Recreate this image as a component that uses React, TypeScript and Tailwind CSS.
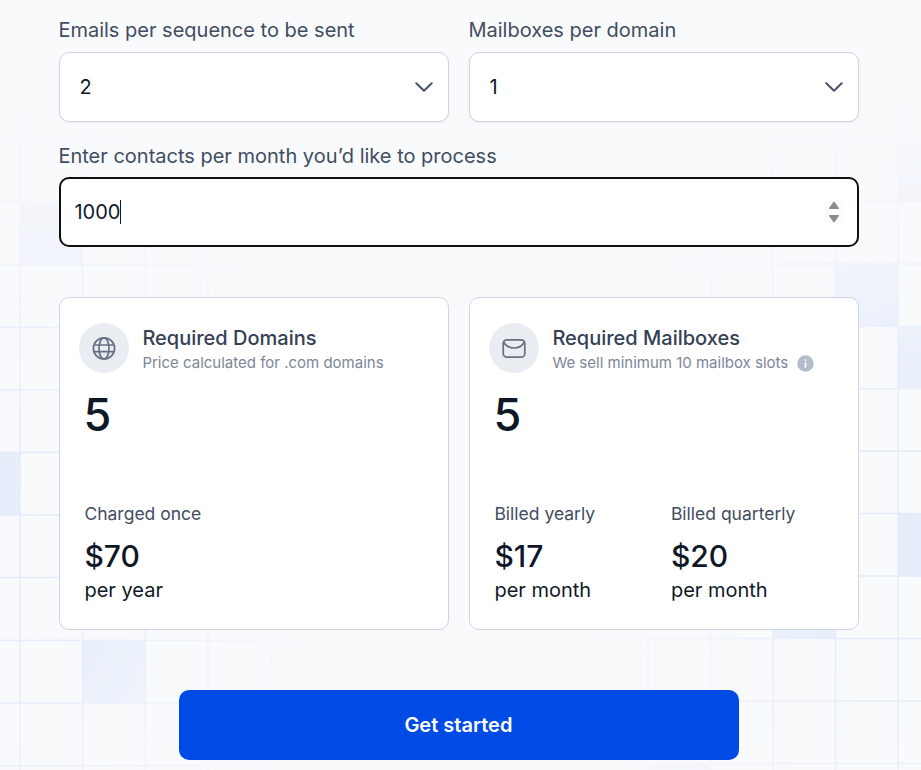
import React from "react";

type Cell = [number, number];

function GridSide({ xs, ys, cells, mask, cx, width }: { xs: number[]; ys: number[]; cells: Cell[]; mask: string; cx: number; width: number }) {
  const left = cx === 0 ? 0 : cx - width;
  return (
    <g mask={`url(#${mask})`}>
      {cells.map(([x, y]) => (
        <rect key={`${x}-${y}`} x={x} y={y} width={62.6} height={62.6} fill="#e6edfa" />
      ))}
      {xs.map((x) => (
        <rect key={x} x={x - 0.75} y={0} width={1.5} height={770} fill="#e3ecfc" />
      ))}
      {ys.map((y) => (
        <rect key={y} x={left} y={y - 0.75} width={width} height={1.5} fill="#e3ecfc" />
      ))}
    </g>
  );
}

function Backdrop() {
  return (
    <svg className="absolute inset-0" width="921" height="770" viewBox="0 0 921 770" aria-hidden="true">
      <defs>
        <radialGradient id="fadeLeft" gradientUnits="userSpaceOnUse" cx="0" cy="0" r="1" gradientTransform="translate(0 550) scale(330 460)">
          <stop offset="0" stopColor="#fff" />
          <stop offset="0.25" stopColor="#f4f4f4" />
          <stop offset="0.75" stopColor="#4d4d4d" />
          <stop offset="1" stopColor="#000" />
        </radialGradient>
        <radialGradient id="fadeRight" gradientUnits="userSpaceOnUse" cx="0" cy="0" r="1" gradientTransform="translate(921 560) scale(340 480)">
          <stop offset="0" stopColor="#fff" />
          <stop offset="0.3" stopColor="#f8f8f8" />
          <stop offset="0.75" stopColor="#555" />
          <stop offset="1" stopColor="#000" />
        </radialGradient>
        <mask id="maskLeft" maskUnits="userSpaceOnUse" x="0" y="0" width="921" height="770">
          <rect width="921" height="770" fill="url(#fadeLeft)" />
        </mask>
        <mask id="maskRight" maskUnits="userSpaceOnUse" x="0" y="0" width="921" height="770">
          <rect width="921" height="770" fill="url(#fadeRight)" />
        </mask>
      </defs>
      <GridSide
        mask="maskLeft"
        cx={0}
        width={400}
        xs={[20, 82.6, 145.4, 208, 270.6, 333.2]}
        ys={[139.5, 202, 264.7, 327.3, 389.8, 452.4, 515, 577.6, 640.4, 703, 765.6]}
        cells={[[20, 202], [-42.6, 452.4], [82.6, 640.4]]}
      />
      <GridSide
        mask="maskRight"
        cx={921}
        width={400}
        xs={[585.5, 648, 710.5, 773, 835.5, 898]}
        ys={[139.3, 201.6, 264, 326.4, 388.7, 451.2, 513.5, 576, 638.5, 701, 763.5]}
        cells={[[898, 139.3], [835.5, 264], [898, 326.4], [898, 513.5], [773, 576], [648, 763.5]]}
      />
    </svg>
  );
}

function Select({ label, value }: { label: string; value: string }) {
  return (
    <div className="flex flex-1 flex-col gap-2">
      <div className="-ml-[0.6px] text-xl leading-7 text-[#414d60]">{label}</div>
      <div className="flex h-[70px] items-center justify-between rounded-[10px] border border-[#cdd3df] bg-white pr-[15px] pl-[19.4px] text-xl text-[#101828] shadow-xs">
        <span>{value}</span>
        <svg width="18" height="18" viewBox="0 0 18 18" fill="none" stroke="#475467" strokeWidth="2" strokeLinecap="round" strokeLinejoin="round">
          <path d="M1.3 5.2 9 12.7l7.7-7.5" />
        </svg>
      </div>
    </div>
  );
}

function GlobeIcon() {
  return (
    <svg className="-ml-px" width="24" height="24" viewBox="0 0 24 24" fill="none" stroke="#667085" strokeWidth="1.7">
      <circle cx="12" cy="12.4" r="10.6" />
      <ellipse cx="12" cy="12.4" rx="5" ry="10.6" />
      <path d="M2 9h20M2 15.6h20" />
    </svg>
  );
}

function EnvelopeIcon() {
  return (
    <svg className="-ml-px" width="24" height="24" viewBox="0 0 24 24" fill="none" stroke="#667085" strokeWidth="1.7" strokeLinejoin="round">
      <rect x="1.2" y="3.8" width="21.6" height="17.4" rx="3.8" />
      <path d="M1.6 6.2C3.8 9.8 7.4 12 12 12S20.2 9.8 22.4 6.2" />
    </svg>
  );
}

function InfoIcon() {
  return (
    <svg width="17" height="17" viewBox="0 0 17 17">
      <circle cx="8.5" cy="8.5" r="8.2" fill="#b4bbca" />
      <rect x="7.6" y="4.2" width="1.8" height="1.8" rx="0.4" fill="#fff" />
      <rect x="7.6" y="7.2" width="1.8" height="5.6" rx="0.4" fill="#fff" />
    </svg>
  );
}

function Price({ label, amount, period }: { label: string; amount: string; period: string }) {
  return (
    <div className="w-[176.5px] whitespace-nowrap">
      <div className="text-[17.5px] leading-[26px] text-[#414d60]">{label}</div>
      <div className="mt-2.5 text-[30px] leading-[38px] font-medium text-[#101828]">{amount}</div>
      <div className="mt-px text-xl leading-[28px] text-[#101828]">{period}</div>
    </div>
  );
}

function Card({ icon, title, subtitle, count, children }: { icon: React.ReactNode; title: string; subtitle: React.ReactNode; count: string; children: React.ReactNode }) {
  return (
    <div className="h-[333px] flex-1 rounded-[10px] border border-[#cdd3df] bg-white pt-[25px]">
      <div className="flex gap-[13.4px] pl-[19px]">
        <div className="flex size-[50px] items-center justify-center rounded-full bg-[#e9ecf1]">{icon}</div>
        <div className="whitespace-nowrap">
          <div className="text-xl leading-[30px] font-medium text-[#344054]">{title}</div>
          <div className="flex items-center gap-[9px] text-[15px] leading-5 text-[#7d8698]">{subtitle}</div>
        </div>
      </div>
      <div className="mt-3 pl-[23.5px] text-[45px] leading-[60px] font-medium text-[#101828]">{count}</div>
      <div className="mt-[56px] flex pl-[24.4px]">{children}</div>
    </div>
  );
}

export default function App() {
  return (
    <div className="relative h-[770px] w-[921px] overflow-hidden bg-[#f9fafc] font-['Inter',sans-serif]">
      <Backdrop />
      <main className="relative ml-[59px] w-[800px] pt-4">
        <div className="flex gap-5">
          <Select label="Emails per sequence to be sent" value="2" />
          <Select label="Mailboxes per domain" value="1" />
        </div>
        <div className="mt-5 -ml-[0.6px] text-xl leading-7 text-[#414d60]">Enter contacts per month you’d like to process</div>
        <div className="mt-[7px] flex h-[70px] items-center justify-between rounded-[10px] border-2 border-[#101010] bg-white pr-[14.5px] pl-[13.4px] text-xl text-[#101828]">
          <span className="flex items-center">
            1000
            <span className="-ml-[0.4px] h-6 w-px bg-[#101828]" />
          </span>
          <span className="flex h-6 w-[18px] flex-col items-center justify-between bg-[#fbfbfb] py-px">
            <svg width="12" height="9" viewBox="0 0 12 9" fill="#8b8b8b" stroke="#8b8b8b" strokeLinejoin="round"><path d="M6 .8 10.7 7.5H1.3Z" /></svg>
            <svg width="12" height="9" viewBox="0 0 12 9" fill="#8b8b8b" stroke="#8b8b8b" strokeLinejoin="round"><path d="M6 8.2 10.7 1.5H1.3Z" /></svg>
          </span>
        </div>
        <div className="mt-[50px] flex gap-5">
          <Card icon={<GlobeIcon />} title="Required Domains" subtitle="Price calculated for .com domains" count="5">
            <Price label="Charged once" amount="$70" period="per year" />
          </Card>
          <Card icon={<EnvelopeIcon />} title="Required Mailboxes" subtitle={<>We sell minimum 10 mailbox slots <InfoIcon /></>} count="5">
            <Price label="Billed yearly" amount="$17" period="per month" />
            <Price label="Billed quarterly" amount="$20" period="per month" />
          </Card>
        </div>
        <button className="mx-auto mt-[60px] flex h-[70px] w-[560px] items-center justify-center rounded-[10px] bg-[#004be6] pr-[1.2px] text-xl font-semibold text-white">
          Get started
        </button>
      </main>
    </div>
  );
}
